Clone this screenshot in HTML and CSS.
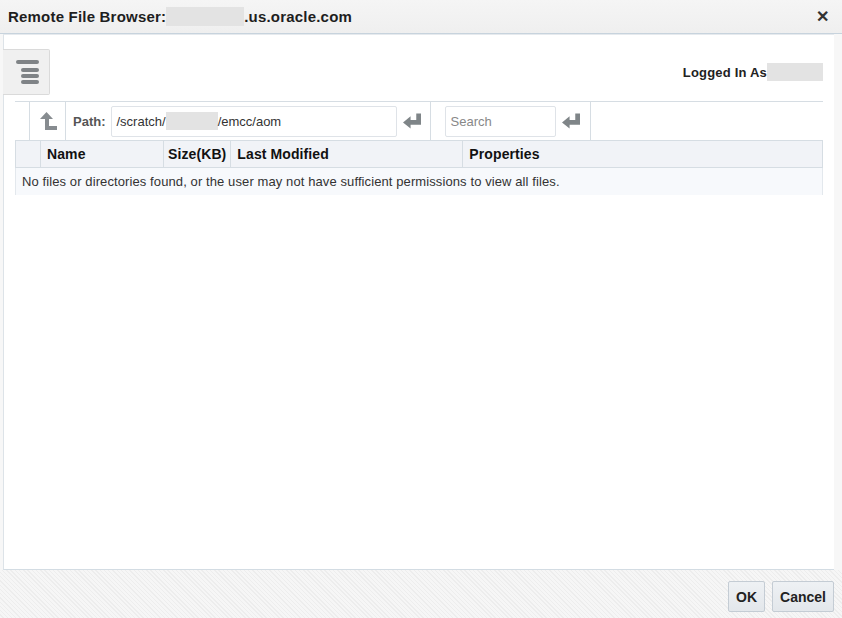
FILE: index.html
```html
<!DOCTYPE html>
<html lang="en">
<head>
  <meta charset="UTF-8" />
  <title>Remote File Browser</title>
  <link rel="stylesheet" href="styles.css">
</head>
<body>
  <div class="dialog">

    <!-- Title bar -->
    <div class="titlebar">
      <span class="title">Remote File Browser:<span class="redacted host"></span>.us.oracle.com</span>
      <span class="close">&#10005;</span>
    </div>

    <div class="main">
      <div class="content">
        <div class="top-row">
          <div class="menu-btn">
            <svg width="24" height="26" viewBox="0 0 24 26">
              <rect x="0" y="1" width="23" height="4" rx="2" fill="#7f8386"/>
              <rect x="5" y="9" width="18" height="4" rx="2" fill="#7f8386"/>
              <rect x="5" y="15" width="18" height="4" rx="2" fill="#7f8386"/>
              <rect x="5" y="21" width="18" height="4" rx="2" fill="#7f8386"/>
            </svg>
          </div>
          <div class="logged">Logged In As<span class="redacted user"></span></div>
        </div>

        <div class="browser">
          <!-- Toolbar -->
          <div class="toolbar">
            <div class="tb-group">
              <div class="tb-btn up">
                <svg width="18" height="20" viewBox="0 0 18 20">
                  <path d="M1 8 L7.5 1 L14 8 H10 V15 H18 V19 H6 V8 Z" fill="#878c90"/>
                </svg>
              </div>
              <div class="tb-path">
                <label>Path:</label>
                <div class="input path-input">/scratch/<span class="redacted dir"></span>/emcc/aom</div>
                <span class="enter">
                  <svg width="18" height="16" viewBox="0 0 19 16">
                    <path d="M14 0 H19 V12 H8 V16 L0 9.5 L8 3 V7 H14 Z" fill="#7f8588"/>
                  </svg>
                </span>
              </div>
              <div class="tb-search">
                <div class="input search-input">Search</div>
                <span class="enter">
                  <svg width="18" height="16" viewBox="0 0 19 16">
                    <path d="M14 0 H19 V12 H8 V16 L0 9.5 L8 3 V7 H14 Z" fill="#7f8588"/>
                  </svg>
                </span>
              </div>
            </div>
          </div>

          <!-- Table -->
          <table class="files">
            <thead>
              <tr>
                <th class="c-sel"></th>
                <th class="c-name">Name</th>
                <th class="c-size">Size(KB)</th>
                <th class="c-mod">Last Modified</th>
                <th class="c-prop">Properties</th>
              </tr>
            </thead>
            <tbody>
              <tr>
                <td colspan="5">No files or directories found, or the user may not have sufficient permissions to view all files.</td>
              </tr>
            </tbody>
          </table>
        </div>
      </div>
      <div class="side"></div>
    </div>

    <!-- Footer -->
    <div class="footer">
      <button class="btn">OK</button>
      <button class="btn">Cancel</button>
    </div>
  </div>
</body>
</html>
```

FILE: styles.css
```css
* {
  margin: 0;
  padding: 0;
  box-sizing: border-box;
}
body {
  font-family: 'Liberation Sans', Arial, sans-serif;
  color: #333;
  background: #fff;
  width: 842px;
  height: 618px;
  overflow: hidden;
}

.dialog {
  display: flex;
  flex-direction: column;
  height: 618px;
}

/* Title bar */
.titlebar {
  height: 34px;
  flex: none;
  display: flex;
  align-items: center;
  justify-content: space-between;
  padding: 0 13px 0 8px;
  background: linear-gradient(#f5f5f5, #efefef);
  border-bottom: 1px solid #c7d3dd;
}
.title {
  font-size: 15px;
  font-weight: bold;
  color: #1e1e1e;
  display: flex;
  align-items: center;
  letter-spacing: 0.2px;
}
.close {
  font-size: 16px;
  font-weight: bold;
  color: #333;
}

.redacted {
  display: inline-block;
  background: #e3e3e3;
}
.redacted.host {
  width: 78px;
  height: 19px;
}
.redacted.user {
  width: 56px;
  height: 18px;
}
.redacted.dir {
  width: 52px;
  height: 18px;
  vertical-align: middle;
}

/* Main */
.main {
  flex: 1;
  display: flex;
  background: #f7f7f7;
}
.content {
  flex: 1;
  margin-left: 3px;
  background: #fff;
  border-left: 1px solid #dde3e8;
  border-top: 1px solid #e6eaee;
  border-bottom: 1px solid #d3dce3;
  padding: 14px 11px 0 0;
}
.side {
  width: 8px;
  flex: none;
}

.top-row {
  display: flex;
  justify-content: space-between;
  align-items: center;
  height: 46px;
}
.menu-btn {
  width: 47px;
  height: 46px;
  margin-left: -1px;
  background: #f0f0f0;
  border: 1px solid #dadada;
  border-left: none;
  border-radius: 0 2px 2px 0;
  display: flex;
  align-items: center;
  justify-content: center;
  padding-left: 3px;
}
.logged {
  font-size: 13px;
  font-weight: bold;
  color: #222;
  display: flex;
  align-items: center;
  letter-spacing: 0.2px;
}

.browser {
  margin: 6px 0 0 11px;
}

/* Toolbar */
.toolbar {
  border-top: 1px solid #d6dde3;
  height: 39px;
  padding-left: 14px;
  display: flex;
}
.tb-group {
  display: flex;
  align-items: stretch;
  border-left: 1px solid #d6dde3;
}
.tb-btn.up {
  width: 36px;
  border-right: 1px solid #d6dde3;
  display: flex;
  align-items: center;
  justify-content: center;
}
.tb-path,
.tb-search {
  display: flex;
  align-items: center;
  border-right: 1px solid #d6dde3;
}
.tb-path {
  padding-left: 7px;
  padding-right: 9px;
}
.tb-path label {
  font-size: 13px;
  font-weight: bold;
  color: #555;
  margin-right: 5px;
}
.tb-search {
  padding-left: 14px;
  padding-right: 10px;
}
.input {
  height: 31px;
  border: 1px solid #dfe3e8;
  border-radius: 2px;
  font-size: 13px;
  color: #333;
  display: flex;
  align-items: center;
  padding-left: 5px;
}
.path-input {
  width: 286px;
}
.search-input {
  width: 111px;
  color: #888;
}
.enter {
  display: flex;
  margin-left: 6px;
}

/* Table */
.files {
  width: 808px;
  border-collapse: collapse;
  font-size: 13px;
}
.files th {
  height: 27px;
  background: #f1f3f7;
  border: 1px solid #d6dde3;
  text-align: left;
  font-size: 14px;
  font-weight: bold;
  color: #111;
  padding: 0 6px;
  letter-spacing: 0.1px;
}
.files .c-sel { width: 25px; }
.files .c-name { width: 123px; }
.files .c-size { width: 67px; padding: 0 4px; }
.files .c-mod { width: 232px; }
.files td {
  height: 27px;
  background: #f7f9fc;
  border-left: 1px solid #e3e8ed;
  border-right: 1px solid #e3e8ed;
  padding: 0 6px;
  color: #333;
  letter-spacing: 0.1px;
}

/* Footer */
.footer {
  height: 48px;
  flex: none;
  display: flex;
  justify-content: flex-end;
  align-items: flex-start;
  gap: 7px;
  padding: 11px 8px 0 0;
  background: repeating-linear-gradient(45deg, #f6f6f6 0, #f6f6f6 2px, #ededed 2px, #ededed 3px);
}
.btn {
  height: 31px;
  padding: 0 7px;
  font-family: 'Liberation Sans', Arial, sans-serif;
  font-size: 14px;
  font-weight: bold;
  color: #222;
  background: linear-gradient(#eef1f4, #e3e7eb);
  border: 1px solid #c4ccd4;
  border-radius: 2px;
}
```
